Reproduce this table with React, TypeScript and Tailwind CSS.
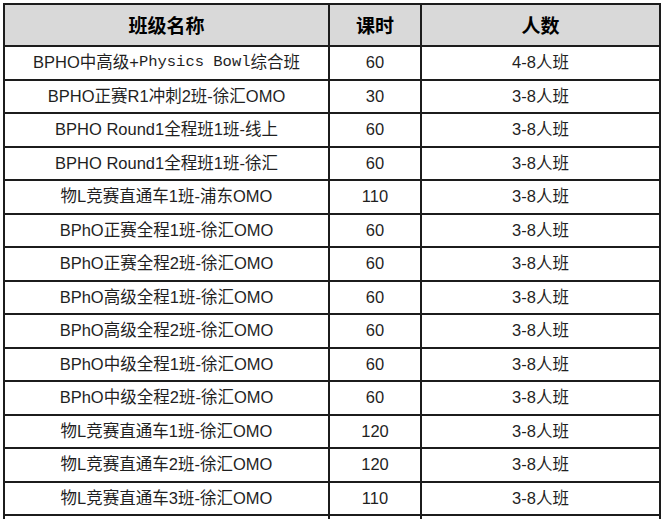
import React from "react";

type Row = { name: React.ReactNode; hours: string; size: string };

const rows: Row[] = [
  {
    name: (
      <>
        BPHO中高级+
        <span className="text-[15.5px] font-['Liberation_Mono','Noto_Sans_CJK_SC',monospace]">Physics Bowl</span>
        综合班
      </>
    ),
    hours: "60",
    size: "4-8人班",
  },
  { name: "BPHO正赛R1冲刺2班-徐汇OMO", hours: "30", size: "3-8人班" },
  { name: "BPHO Round1全程班1班-线上", hours: "60", size: "3-8人班" },
  { name: "BPHO Round1全程班1班-徐汇", hours: "60", size: "3-8人班" },
  { name: "物L竞赛直通车1班-浦东OMO", hours: "110", size: "3-8人班" },
  { name: "BPhO正赛全程1班-徐汇OMO", hours: "60", size: "3-8人班" },
  { name: "BPhO正赛全程2班-徐汇OMO", hours: "60", size: "3-8人班" },
  { name: "BPhO高级全程1班-徐汇OMO", hours: "60", size: "3-8人班" },
  { name: "BPhO高级全程2班-徐汇OMO", hours: "60", size: "3-8人班" },
  { name: "BPhO中级全程1班-徐汇OMO", hours: "60", size: "3-8人班" },
  { name: "BPhO中级全程2班-徐汇OMO", hours: "60", size: "3-8人班" },
  { name: "物L竞赛直通车1班-徐汇OMO", hours: "120", size: "3-8人班" },
  { name: "物L竞赛直通车2班-徐汇OMO", hours: "120", size: "3-8人班" },
  { name: "物L竞赛直通车3班-徐汇OMO", hours: "110", size: "3-8人班" },
];

export default function App() {
  return (
    <div className="bg-white pl-[3px] pt-[3px] w-[664px] font-['Liberation_Sans','Noto_Sans_CJK_SC',sans-serif]">
      <div className="grid grid-cols-[323px_90px_237px] gap-[2px] bg-[#1c1c1c] p-[2px] w-fit">
        <div className="h-[40px] bg-[#d9d9d9] flex items-center justify-center text-[19px] font-bold text-black font-['Noto_Sans_CJK_SC',sans-serif]">
          班级名称
        </div>
        <div className="h-[40px] bg-[#d9d9d9] flex items-center justify-center text-[19px] font-bold text-black font-['Noto_Sans_CJK_SC',sans-serif]">
          课时
        </div>
        <div className="h-[40px] bg-[#d9d9d9] flex items-center justify-center text-[19px] font-bold text-black font-['Noto_Sans_CJK_SC',sans-serif]">
          人数
        </div>
        {rows.map((r, i) => (
          <React.Fragment key={i}>
            <div className="h-[31.5px] bg-white flex items-center justify-center text-[16.5px] text-[#1f1f1f] whitespace-nowrap">
              {r.name}
            </div>
            <div className="h-[31.5px] bg-white flex items-center justify-center text-[16.5px] text-[#1f1f1f]">
              {r.hours}
            </div>
            <div className="h-[31.5px] bg-white flex items-center justify-center text-[16.5px] text-[#1f1f1f]">
              {r.size}
            </div>
          </React.Fragment>
        ))}
        <div className="h-[31.5px] bg-white" />
        <div className="h-[31.5px] bg-white" />
        <div className="h-[31.5px] bg-white" />
      </div>
    </div>
  );
}
